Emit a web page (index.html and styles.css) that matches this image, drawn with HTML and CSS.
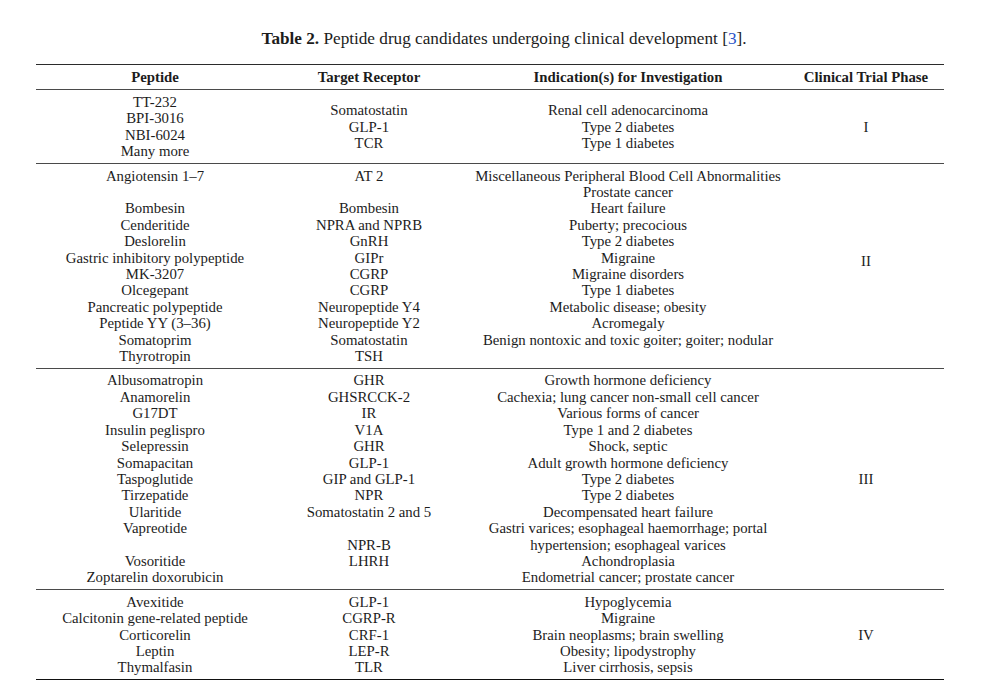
FILE: index.html
```html
<!DOCTYPE html>
<html lang="en">
<head>
<meta charset="utf-8">
<title>Table 2</title>
<link rel="stylesheet" href="styles.css">
</head>
<body>
<div class="page">
  <p class="caption"><b>Table 2.</b> Peptide drug candidates undergoing clinical development [<span class="ref">3</span>].</p>
  <div class="table">
    <div class="row head">
      <div class="cell">Peptide</div>
      <div class="cell">Target Receptor</div>
      <div class="cell">Indication(s) for Investigation</div>
      <div class="cell">Clinical Trial Phase</div>
    </div>

    <div class="row group">
      <div class="cell">
        <div>TT-232</div><div>BPI-3016</div><div>NBI-6024</div><div>Many more</div>
      </div>
      <div class="cell">
        <div>Somatostatin</div><div>GLP-1</div><div>TCR</div>
      </div>
      <div class="cell">
        <div>Renal cell adenocarcinoma</div><div>Type 2 diabetes</div><div>Type 1 diabetes</div>
      </div>
      <div class="cell"><div>I</div></div>
    </div>

    <div class="row group">
      <div class="cell">
        <div>Angiotensin 1–7</div><div class="blank">&nbsp;</div><div>Bombesin</div><div>Cenderitide</div><div>Deslorelin</div><div>Gastric inhibitory polypeptide</div><div>MK-3207</div><div>Olcegepant</div><div>Pancreatic polypeptide</div><div>Peptide YY (3–36)</div><div>Somatoprim</div><div>Thyrotropin</div>
      </div>
      <div class="cell">
        <div>AT 2</div><div class="blank">&nbsp;</div><div>Bombesin</div><div>NPRA and NPRB</div><div>GnRH</div><div>GIPr</div><div>CGRP</div><div>CGRP</div><div>Neuropeptide Y4</div><div>Neuropeptide Y2</div><div>Somatostatin</div><div>TSH</div>
      </div>
      <div class="cell">
        <div>Miscellaneous Peripheral Blood Cell Abnormalities</div><div>Prostate cancer</div><div>Heart failure</div><div>Puberty; precocious</div><div>Type 2 diabetes</div><div>Migraine</div><div>Migraine disorders</div><div>Type 1 diabetes</div><div>Metabolic disease; obesity</div><div>Acromegaly</div><div>Benign nontoxic and toxic goiter; goiter; nodular</div><div class="blank">&nbsp;</div>
      </div>
      <div class="cell phase-raised"><div>II</div></div>
    </div>

    <div class="row group">
      <div class="cell">
        <div>Albusomatropin</div><div>Anamorelin</div><div>G17DT</div><div>Insulin peglispro</div><div>Selepressin</div><div>Somapacitan</div><div>Taspoglutide</div><div>Tirzepatide</div><div>Ularitide</div><div>Vapreotide</div><div class="blank">&nbsp;</div><div>Vosoritide</div><div>Zoptarelin doxorubicin</div>
      </div>
      <div class="cell">
        <div>GHR</div><div>GHSRCCK-2</div><div>IR</div><div>V1A</div><div>GHR</div><div>GLP-1</div><div>GIP and GLP-1</div><div>NPR</div><div>Somatostatin 2 and 5</div><div class="blank">&nbsp;</div><div>NPR-B</div><div>LHRH</div><div class="blank">&nbsp;</div>
      </div>
      <div class="cell">
        <div>Growth hormone deficiency</div><div>Cachexia; lung cancer non-small cell cancer</div><div>Various forms of cancer</div><div>Type 1 and 2 diabetes</div><div>Shock, septic</div><div>Adult growth hormone deficiency</div><div>Type 2 diabetes</div><div>Type 2 diabetes</div><div>Decompensated heart failure</div><div>Gastri varices; esophageal haemorrhage; portal</div><div>hypertension; esophageal varices</div><div>Achondroplasia</div><div>Endometrial cancer; prostate cancer</div>
      </div>
      <div class="cell"><div>III</div></div>
    </div>

    <div class="row group last">
      <div class="cell">
        <div>Avexitide</div><div>Calcitonin gene-related peptide</div><div>Corticorelin</div><div>Leptin</div><div>Thymalfasin</div>
      </div>
      <div class="cell">
        <div>GLP-1</div><div>CGRP-R</div><div>CRF-1</div><div>LEP-R</div><div>TLR</div>
      </div>
      <div class="cell">
        <div>Hypoglycemia</div><div>Migraine</div><div>Brain neoplasms; brain swelling</div><div>Obesity; lipodystrophy</div><div>Liver cirrhosis, sepsis</div>
      </div>
      <div class="cell"><div>IV</div></div>
    </div>
  </div>
</div>
</body>
</html>
```

FILE: styles.css
```css
html, body {
  margin: 0;
  padding: 0;
  background: #ffffff;
}

body {
  font-family: "Liberation Serif", "Times New Roman", serif;
  font-size: 14.8px;
  color: #1c1c1c;
}

.page {
  padding: 28px 0 0 36px;
  width: 908px;
}

.caption {
  margin: 0 0 15px 0;
  padding-left: 28px;
  text-align: center;
  font-size: 17.2px;
  line-height: 21px;
}

.caption .ref {
  color: #2a55c8;
}

.table {
  display: flex;
  flex-direction: column;
  border-top: 1.5px solid #2b2b2b;
  border-bottom: 1.5px solid #111111;
}

.row {
  display: grid;
  grid-template-columns: 238px 190px 328px 148px;
  align-items: center;
  line-height: 16.4px;
}

.row.head {
  font-weight: bold;
  padding: 4px 0 4px 0;
  border-bottom: 1px solid #4a4a4a;
}

.row.group {
  padding: 3.6px 0 3.4px 0;
  border-bottom: 1px solid #4a4a4a;
}

.row.group.last {
  border-bottom: none;
}

.cell {
  text-align: center;
  display: flex;
  flex-direction: column;
  white-space: nowrap;
}

.phase-raised {
  padding-bottom: 10px;
}
```
